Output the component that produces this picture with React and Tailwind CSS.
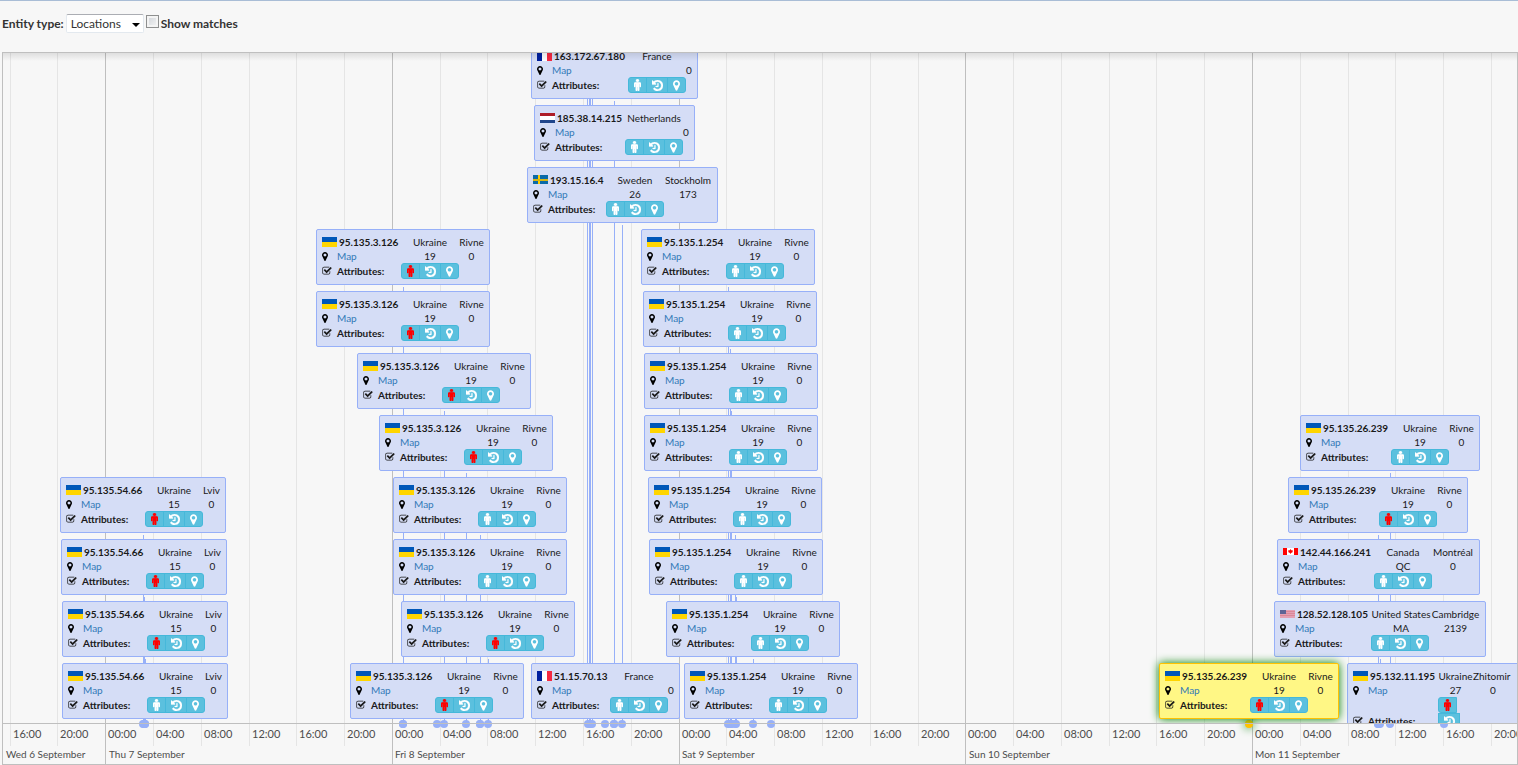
import React from "react";

const DAY_WIDTH = 286.7;
const ORIGIN = 102.7;
const ROW_PITCH = 62;

const HOURS = ["00:00", "04:00", "08:00", "12:00", "16:00", "20:00"];

const DAYS = [
  { label: "Wed 6 September", left: 3 },
  { label: "Thu 7 September", left: 106 },
  { label: "Fri 8 September", left: 392 },
  { label: "Sat 9 September", left: 679 },
  { label: "Sun 10 September", left: 966 },
  { label: "Mon 11 September", left: 1252 },
];

const TICKS = Array.from({ length: 32 }, (_, i) => {
  const k = i - 2;
  return {
    left: Math.floor(ORIGIN + (k * DAY_WIDTH) / 6),
    label: HOURS[(k + 6) % 6],
    major: k % 6 === 0,
  };
});

const ua = (ip, city, left, row, c1, c3, red) => ({
  flag: "ua", ip, country: "Ukraine", city, region: city === "Lviv" ? "15" : "19", code: "0", left, row, cols: [c1, 58, c3], red,
});

const ITEMS = [
  { flag: "fr", ip: "163.172.67.180", country: "France", city: "", region: "", code: "0", left: 528, row: 10, cols: [91, 58, 6] },
  { flag: "nl", ip: "185.38.14.215", country: "Netherlands", city: "", region: "", code: "0", left: 531, row: 9, cols: [85, 58, 6] },
  { flag: "se", ip: "193.15.16.4", country: "Sweden", city: "Stockholm", region: "26", code: "173", left: 524, row: 8, cols: [73, 58, 48] },
  ua("95.135.3.126", "Rivne", 313, 7, 79, 25, true),
  ua("95.135.3.126", "Rivne", 313, 6, 79, 25, true),
  ua("95.135.3.126", "Rivne", 354, 5, 79, 25, true),
  ua("95.135.3.126", "Rivne", 376, 4, 79, 25, true),
  ua("95.135.3.126", "Rivne", 390, 3, 79, 25, false),
  ua("95.135.3.126", "Rivne", 390, 2, 79, 25, false),
  ua("95.135.3.126", "Rivne", 398, 1, 79, 25, true),
  ua("95.135.3.126", "Rivne", 347, 0, 79, 25, true),
  ua("95.135.54.66", "Lviv", 57, 3, 79, 17, true),
  ua("95.135.54.66", "Lviv", 58, 2, 79, 17, true),
  ua("95.135.54.66", "Lviv", 59, 1, 79, 17, true),
  ua("95.135.54.66", "Lviv", 59, 0, 79, 17, false),
  ua("95.135.1.254", "Rivne", 638, 7, 79, 25, false),
  ua("95.135.1.254", "Rivne", 640, 6, 79, 25, false),
  ua("95.135.1.254", "Rivne", 641, 5, 79, 25, false),
  ua("95.135.1.254", "Rivne", 641, 4, 79, 25, false),
  ua("95.135.1.254", "Rivne", 645, 3, 79, 25, false),
  ua("95.135.1.254", "Rivne", 646, 2, 79, 25, false),
  ua("95.135.1.254", "Rivne", 663, 1, 79, 25, false),
  ua("95.135.1.254", "Rivne", 681, 0, 79, 25, false),
  { flag: "fr", ip: "51.15.70.13", country: "France", city: "", region: "", code: "0", left: 528, row: 0, cols: [73, 58, 6] },
  ua("95.135.26.239", "Rivne", 1297, 4, 85, 25, false),
  ua("95.135.26.239", "Rivne", 1285, 3, 85, 25, true),
  { flag: "ca", ip: "142.44.166.241", country: "Canada", city: "Montréal", region: "QC", code: "0", left: 1274, row: 2, cols: [91, 58, 42] },
  { flag: "us", ip: "128.52.128.105", country: "United States", city: "Cambridge", region: "MA", code: "2139", left: 1271, row: 1, cols: [91, 60, 49] },
  { flag: "ua", ip: "95.132.11.195", country: "Ukraine", city: "Zhitomir", region: "27", code: "0", left: 1344, row: 0, cols: [85, 35, 62], red: true, stacked: true },
  { ...ua("95.135.26.239", "Rivne", 1156, 0, 85, 25, true), selected: true },
];

const LONG_LINES = [584, 586, 587, 589];

const centerOf = (item) => item.left + Math.floor((item.cols[0] + item.cols[1] + item.cols[2] + 12) / 2);

function Flag({ code }) {
  return (
    <svg width="15" height="10" viewBox="0 0 15 10" shapeRendering="crispEdges" className="shrink-0" aria-label={code}>
      {code === "ua" && (<><rect width="15" height="5" fill="#0057b8" /><rect y="5" width="15" height="5" fill="#ffd500" /></>)}
      {code === "fr" && (<><rect width="5" height="10" fill="#00209f" /><rect x="5" width="5" height="10" fill="#fff" /><rect x="10" width="5" height="10" fill="#f42a41" /></>)}
      {code === "nl" && (<><rect width="15" height="3" fill="#ae1c28" /><rect y="3" width="15" height="4" fill="#fff" /><rect y="7" width="15" height="3" fill="#21468b" /></>)}
      {code === "se" && (<><rect width="15" height="9" fill="#0b6aa8" /><rect x="5" width="2" height="9" fill="#fecc00" /><rect y="4" width="15" height="2" fill="#d8b512" /></>)}
      {code === "ca" && (
        <>
          <rect y="1" width="15" height="7" fill="#fff" />
          <rect y="1" width="4" height="7" fill="#f00" />
          <rect x="11" y="1" width="4" height="7" fill="#f00" />
          <path d="M7.5 2l.8 1.2 1.7.3-.7 1.9-1.5.7v.9h-.6v-.9l-1.5-.7-.7-1.9 1.7-.3z" fill="#f00" shapeRendering="auto" />
        </>
      )}
      {code === "us" && (
        <>
          <rect y="1" width="15" height="8" fill="#e3a0b4" />
          <path d="M0 2.5h15M0 4.5h15M0 6.5h15" stroke="#dc8798" strokeWidth="1" />
          <rect y="1" width="6" height="4" fill="#5e6496" />
        </>
      )}
    </svg>
  );
}

function MaleIcon() {
  return (
    <svg width="7" height="12" viewBox="384 160 1024 1760" fill="currentColor" aria-hidden="true">
      <path d="M1408 832v416q0 40-28 68t-68 28-68-28-28-68v-352h-64v912q0 46-33 79t-79 33-79-33-33-79v-464h-64v464q0 46-33 79t-79 33-79-33-33-79v-912h-64v352q0 40-28 68t-68 28-68-28-28-68v-416q0-80 56-136t136-56h640q80 0 136 56t56 136zm-288-448q0 93-65.500 158.500t-158.500 65.500-158.500-65.500-65.500-158.500 65.500-158.500 158.500-65.500 158.500 65.500 65.500 158.500z" stroke="currentColor" strokeWidth="60" />
    </svg>
  );
}

function HistoryIcon() {
  return (
    <svg width="11" height="11" viewBox="128 128 1536 1536" fill="currentColor" aria-hidden="true">
      <path d="M1664 896q0 156-61 298t-164 245-245 164-298 61q-172 0-327-72.500t-264-204.500q-7-10-6.500-22.500t8.500-20.500l137-138q10-9 25-9 16 2 23 12 73 95 179 147t225 52q104 0 198.500-40.500t163.500-109.500 109.500-163.500 40.500-198.500-40.500-198.500-109.500-163.500-163.500-109.500-198.500-40.500q-98 0-188 35.500t-160 101.500l137 138q31 30 14 69-17 40-59 40h-448q-26 0-45-19t-19-45v-448q0-42 40-59 39-17 69 14l130 129q107-101 244.500-156.500t284.500-55.500q156 0 298 61t245 164 164 245 61 298zm-640-288v448q0 14-9 23t-23 9h-320q-14 0-23-9t-9-23v-64q0-14 9-23t23-9h224v-352q0-14 9-23t23-9h64q14 0 23 9t9 23z" stroke="currentColor" strokeWidth="50" />
    </svg>
  );
}

function MarkerIcon({ className }) {
  return (
    <svg className={className} viewBox="384 128 1024 1536" fill="currentColor" aria-hidden="true">
      <path d="M1152 640q0-106-75-181t-181-75-181 75-75 181 75 181 181 75 181-75 75-181zm256 0q0 109-33 179l-364 774q-16 33-47.500 52t-67.500 19-67.500-19-46.500-52l-365-774q-33-70-33-179 0-212 150-362t362-150 362 150 150 362z" />
    </svg>
  );
}

function CheckIcon() {
  return (
    <svg width="10" height="10" viewBox="0 0 1792 1792" fill="currentColor" aria-hidden="true">
      <path d="M1472 930v318q0 119-84.500 203.500t-203.500 84.500h-832q-119 0-203.500-84.500t-84.500-203.500v-832q0-119 84.500-203.500t203.500-84.500h832q63 0 117 25 15 7 18 23 3 17-9 29l-49 49q-10 10-23 10-3 0-9-2-23-6-45-6h-832q-66 0-113 47t-47 113v832q0 66 47 113t113 47h832q66 0 113-47t47-113v-254q0-13 9-22l64-64q10-10 23-10 6 0 12 3 20 8 20 29zm231-489l-814 814q-24 24-57 24t-57-24l-430-430q-24-24-24-57t24-57l110-110q24-24 57-24t57 24l263 263 647-647q24-24 57-24t57 24l110 110q24 24 24 57t-24 57z" />
    </svg>
  );
}

function ActionButtons({ red, stacked }) {
  const base = "flex h-4 items-center justify-center border border-[#46b8da] bg-[#5bc0de]";
  return (
    <div className={stacked ? "flex flex-col items-start text-white" : "flex text-white"}>
      <button type="button" aria-label="Person" className={`${base} w-[19px] rounded-l-[3px] ${red ? "text-[#ff0000]" : "text-white"}`}>
        <MaleIcon />
      </button>
      <button type="button" aria-label="History" className={`${base} w-[22px] ${stacked ? "" : "-ml-px"}`}>
        <HistoryIcon />
      </button>
      <button type="button" aria-label="Place" className={`${base} w-[19px] rounded-r-[3px] ${stacked ? "" : "-ml-px"}`}>
        <MarkerIcon className="h-[11px] w-[7px]" />
      </button>
    </div>
  );
}

function Card({ item }) {
  const { flag, ip, country, city, region, code, left, row, cols, red, stacked, selected } = item;
  return (
    <article
      className={`absolute rounded-[2px] border p-[5px] text-[10px] text-[#1a1a1a] ${
        selected
          ? "border-[#ffc200] bg-[#fff785] shadow-[0_0_10px_green]"
          : "border-[#97b0f8] bg-[#d5ddf6]"
      }`}
      style={{ left, bottom: stacked ? -28 : 4 + row * ROW_PITCH }}
    >
      <table className="table-fixed border-collapse leading-[14px]" style={{ width: cols[0] + cols[1] + cols[2] }}>
        <colgroup>
          {cols.map((w, i) => (
            <col key={i} style={{ width: w }} />
          ))}
        </colgroup>
        <tbody>
          <tr className="h-[14px] whitespace-nowrap">
            <td className="p-0">
              <div className="flex h-[14px] items-center gap-[2px] font-bold text-[#1a1a1a]">
                <Flag code={flag} />
                {ip}
              </div>
            </td>
            <td className="p-0">
              <div className="flex justify-center">{country}</div>
            </td>
            <td className="p-0">
              <div className={stacked ? "flex justify-start" : "flex justify-center"}>{city}</div>
            </td>
          </tr>
          <tr className="h-[14px]">
            <td className="p-0">
              <div className="flex h-[14px] items-center">
                <span className="flex w-[15px]">
                  <MarkerIcon className="h-[9px] w-[6px] text-black" />
                </span>
                <a href="#map" className="text-[#337ab7]">Map</a>
              </div>
            </td>
            <td className="p-0 text-center">{region}</td>
            <td className={stacked ? "p-0 pr-[22px] text-center" : "p-0 text-center"}>{code}</td>
          </tr>
          <tr className="h-4">
            <td className="p-0 align-middle">
              <div className="flex h-4 items-center font-bold text-[#1a1a1a]">
                <span className="flex w-[15px]"><CheckIcon /></span>
                Attributes:
              </div>
            </td>
            <td className="p-0">
              <ActionButtons red={red} stacked={stacked} />
            </td>
            <td className="p-0" />
          </tr>
        </tbody>
      </table>
    </article>
  );
}

function Toolbar() {
  return (
    <form className="flex h-[51px] items-start pt-[13px] pl-[2px] text-[12px] text-[#333]">
      <label htmlFor="entity-type" className="pr-[2px] font-bold leading-5">Entity type:</label>
      <div className="relative">
        <select
          id="entity-type"
          defaultValue="Locations"
          className="h-[19px] w-[78px] appearance-none rounded-[2px] border border-[#e3e9ef] border-t-[#abadb3] bg-white pl-1 text-[12px] leading-4 text-[#333]"
        >
          <option>Locations</option>
        </select>
        <svg width="8" height="4" viewBox="0 0 8 4" className="pointer-events-none absolute top-[9px] right-1" aria-hidden="true">
          <path d="M0 0h8L4 4z" fill="#000" />
        </svg>
      </div>
      <input
        id="show-matches"
        type="checkbox"
        className="mt-px ml-[2px] size-[13px] appearance-none border border-[#8e8f8f] bg-linear-to-br from-[#cfd3d8] to-[#f6f6f6] shadow-[inset_0_0_0_2px_#f4f4f4]"
      />
      <label htmlFor="show-matches" className="pl-[2px] font-bold leading-5">Show matches</label>
    </form>
  );
}

function Timeline() {
  return (
    <section className="relative ml-[2px] overflow-hidden border border-[#bfbfbf]">
      {TICKS.map((t) => (
        <div
          key={t.left}
          className={`absolute top-0 w-px ${t.major ? "bottom-0 bg-[#bfbfbf]" : "bottom-[18px] bg-[#e5e5e5]"}`}
          style={{ left: t.left }}
        />
      ))}
      <div className="relative h-[670px]">
        {LONG_LINES.map((x) => (
          <div key={x} className="absolute inset-y-0 w-px bg-[#97b0f8]" style={{ left: x }} />
        ))}
        {ITEMS.filter((i) => i.row > 0).map((i) => (
          <div
            key={`${i.left}-${i.row}`}
            className="absolute bottom-0 w-px bg-[#97b0f8]"
            style={{ left: centerOf(i), height: 2 + i.row * ROW_PITCH }}
          />
        ))}
        {[585, 587, 589].map((x) => (
          <div key={x} className="absolute -bottom-[5px] size-2 rounded-full bg-[#97b0f8]" style={{ left: x - 4 }} />
        ))}
        {ITEMS.map((i) => (
          <div
            key={`${i.left}-${i.row}`}
            className={`absolute -bottom-[5px] size-2 rounded-full ${i.selected ? "bg-[#ffc200] shadow-[0_0_10px_green]" : "bg-[#97b0f8]"}`}
            style={{ left: centerOf(i) - 4 }}
          />
        ))}
        <div className="absolute inset-0 overflow-hidden">
          {ITEMS.map((i) => (
            <Card key={`${i.left}-${i.row}`} item={i} />
          ))}
        </div>
      </div>
      <div className="relative h-[41px] border-t border-[#bfbfbf] text-[#4d4d4d]">
        {TICKS.map((t) => (
          <span key={t.left} className="absolute top-[3px] text-[11px] leading-[14px]" style={{ left: t.left + 3 }}>
            {t.label}
          </span>
        ))}
        {DAYS.map((d) => (
          <span key={d.label} className="absolute top-[23px] whitespace-nowrap text-[10px] leading-[14px]" style={{ left: d.left }}>
            {d.label}
          </span>
        ))}
      </div>
      <div className="pointer-events-none absolute inset-x-0 top-0 h-2 bg-linear-to-b from-black/10 to-transparent" />
    </section>
  );
}

export default function App() {
  return (
    <main className="border-t border-[#a9bdd6] bg-[#f7f7f7] font-['Lato','Open_Sans',sans-serif]">
      <Toolbar />
      <Timeline />
    </main>
  );
}
